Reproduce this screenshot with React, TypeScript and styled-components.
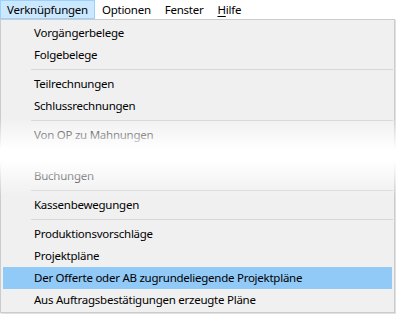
import React from "react";
import styled, { createGlobalStyle } from "styled-components";

const GlobalStyle = createGlobalStyle`
    html, body {
        margin: 0;
        padding: 0;
        background: #ffffff;
    }
    body {
        font-family: "Noto Sans", "Open Sans", sans-serif;
        font-size: 11.5px;
        letter-spacing: -0.25px;
        color: #000;
    }
`;

const Page = styled.div`
    width: 396px;
    height: 314px;
    position: relative;
    overflow: hidden;
`;

const MenuBar = styled.div`
    display: flex;
    height: 19px;
    background: #fff;
`;

const MenuTitle = styled.div<{ $active?: boolean }>`
    box-sizing: border-box;
    height: 19px;
    line-height: 17px;
    padding: 0 6px;
    border: 1px solid ${(p) => (p.$active ? "#99d1ff" : "transparent")};
    background: ${(p) => (p.$active ? "#cce8ff" : "transparent")};
    white-space: nowrap;

    u {
        text-decoration: underline;
        text-underline-offset: 2px;
    }
`;

const Dropdown = styled.div`
    position: relative;
    box-sizing: border-box;
    width: 395px;
    background: #f0f0f0;
    border: 1px solid #cccccc;
    padding: 2px 0 1px;
    box-shadow: 1px 1px 1px rgba(0, 0, 0, 0.12);
`;

const Item = styled.div<{ $active?: boolean }>`
    height: 22px;
    line-height: 22px;
    margin: 0 2px;
    padding-left: 31px;
    white-space: nowrap;
    background: ${(p) => (p.$active ? "#91c9f7" : "transparent")};
`;

const Separator = styled.div`
    height: 7px;
    display: flex;
    align-items: center;
    padding-left: 30px;
    margin-right: 1px;

    &::after {
        content: "";
        flex: 1;
        height: 1px;
        background: #d7d7d7;
    }
`;

const Spacer = styled.div`
    height: 19px;
`;

const Fade = styled.div`
    position: absolute;
    left: -1px;
    right: -3px;
    top: 98px;
    height: 78px;
    pointer-events: none;
    background: linear-gradient(
        to bottom,
        rgba(255, 255, 255, 0) 0%,
        rgba(255, 255, 255, 1) 40%,
        rgba(255, 255, 255, 1) 55%,
        rgba(255, 255, 255, 0) 100%
    );
`;

type Entry = { label?: string; sep?: boolean; gap?: boolean; active?: boolean };

const entries: Entry[] = [
    { label: "Vorgängerbelege" },
    { label: "Folgebelege" },
    { sep: true },
    { label: "Teilrechnungen" },
    { label: "Schlussrechnungen" },
    { sep: true },
    { label: "Von OP zu Mahnungen" },
    { gap: true },
    { label: "Buchungen" },
    { sep: true },
    { label: "Kassenbewegungen" },
    { sep: true },
    { label: "Produktionsvorschläge" },
    { label: "Projektpläne" },
    { label: "Der Offerte oder AB zugrundeliegende Projektpläne", active: true },
    { label: "Aus Auftragsbestätigungen erzeugte Pläne" },
];

function App(): JSX.Element {
    return (
        <Page>
            <GlobalStyle />
            <MenuBar>
                <MenuTitle $active>Verknüpfungen</MenuTitle>
                <MenuTitle>Optionen</MenuTitle>
                <MenuTitle>Fenster</MenuTitle>
                <MenuTitle>
                    <u>H</u>ilfe
                </MenuTitle>
            </MenuBar>
            <Dropdown>
                {entries.map((e, i) => {
                    if (e.sep) return <Separator key={i} />;
                    if (e.gap) return <Spacer key={i} />;
                    return (
                        <Item key={i} $active={e.active}>
                            {e.label}
                        </Item>
                    );
                })}
                <Fade />
            </Dropdown>
        </Page>
    );
}

export default App;
